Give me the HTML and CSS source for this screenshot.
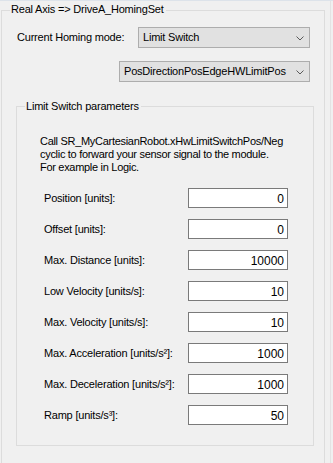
FILE: index.html
```html
<!DOCTYPE html>
<html lang="en">
<head>
  <meta charset="UTF-8">
  <title>Real Axis - Homing</title>
  <link rel="stylesheet" href="styles.css">
</head>
<body>
  <div class="window">
    <fieldset class="group outer">
      <legend>Real Axis =&gt; DriveA_HomingSet</legend>
      <div class="mode-row">
        <span class="mode-label">Current Homing mode:</span>
        <div class="combo combo-mode">
          <span>Limit Switch</span>
          <svg class="chevron" width="8" height="5" viewBox="0 0 8 5"><path d="M0.5 0.5 L4 4 L7.5 0.5" fill="none" stroke="#5a5a5a" stroke-width="1"/></svg>
        </div>
      </div>
      <div class="combo combo-dir">
        <span>PosDirectionPosEdgeHWLimitPos</span>
        <svg class="chevron" width="8" height="5" viewBox="0 0 8 5"><path d="M0.5 0.5 L4 4 L7.5 0.5" fill="none" stroke="#5a5a5a" stroke-width="1"/></svg>
      </div>

      <fieldset class="group inner">
        <legend>Limit Switch parameters</legend>
        <p class="hint">Call SR_MyCartesianRobot.xHwLimitSwitchPos/Neg<br>cyclic to forward your sensor signal to the module.<br>For example in Logic.</p>
        <div class="params">
          <label class="param-label">Position [units]:</label><div class="field">0</div>
          <label class="param-label">Offset [units]:</label><div class="field">0</div>
          <label class="param-label">Max. Distance [units]:</label><div class="field">10000</div>
          <label class="param-label">Low Velocity [units/s]:</label><div class="field">10</div>
          <label class="param-label">Max. Velocity [units/s]:</label><div class="field">10</div>
          <label class="param-label">Max. Acceleration [units/s²]:</label><div class="field">1000</div>
          <label class="param-label">Max. Deceleration [units/s²]:</label><div class="field">1000</div>
          <label class="param-label">Ramp [units/s³]:</label><div class="field">50</div>
        </div>
      </fieldset>
    </fieldset>
    <div class="edge"></div>
  </div>
</body>
</html>
```

FILE: styles.css
```css
* { margin: 0; padding: 0; box-sizing: border-box; }
html, body {
  width: 333px;
  height: 463px;
  overflow: hidden;
}
body {
  background: #f0f0f0;
  font-family: "Liberation Sans", Arial, sans-serif;
  font-size: 11px;
  line-height: 13px;
  letter-spacing: -0.2px;
  color: #000;
  border-top: 1px solid #dde3ea;
}
.window {
  display: flex;
  align-items: flex-start;
}
.group {
  border: 1px solid #dcdcdc;
  min-width: 0;
}
.group legend {
  padding: 0 2px 0 1px;
  line-height: 13px;
}
.outer {
  width: 324px;
  height: 480px;
  margin: 2px 0 0 1px;
}
.outer > legend {
  margin-left: 8px;
  padding-bottom: 2px;
}
.mode-row {
  display: flex;
  align-items: center;
  margin-top: 9px;
}
.mode-label {
  margin-left: 15px;
  width: 121px;
}
.combo {
  display: flex;
  align-items: center;
  justify-content: space-between;
  height: 21px;
  background: #e1e1e1;
  border: 1px solid #adadad;
  padding: 0 5px 0 4px;
}
.combo-mode { width: 172px; }
.combo-dir {
  width: 191px;
  margin: 13px 0 0 117px;
}
.chevron { margin-top: 1px; }
.inner {
  width: 298px;
  height: 346px;
  margin: 18px 0 0 14px;
}
.inner > legend {
  margin-left: 8px;
}
.hint {
  margin: 22px 0 0 23px;
  letter-spacing: -0.3px;
}
.params {
  display: grid;
  grid-template-columns: 144px 100px;
  grid-auto-rows: 20px;
  row-gap: 11px;
  margin: 14px 0 0 27px;
  align-items: center;
}
.field {
  height: 20px;
  background: #fff;
  border: 1px solid #7a7a7a;
  text-align: right;
  padding: 3px 3px 0 0;
  font-size: 12px;
  line-height: 14px;
  letter-spacing: 0;
}
.edge {
  width: 1px;
  height: 463px;
  margin-left: 5px;
  background: #e3e3e3;
}
```
